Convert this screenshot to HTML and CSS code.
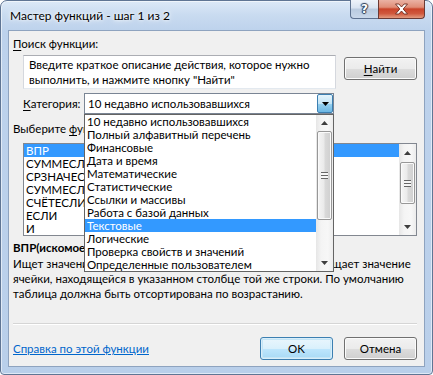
FILE: index.html
```html
<!DOCTYPE html>
<html lang="ru">
<head>
<meta charset="utf-8">
<title>Мастер функций - шаг 1 из 2</title>
<link rel="stylesheet" href="styles.css">
</head>
<body>
<div class="window">
  <div class="titlebar">
    <div class="title">Мастер функций - шаг 1 из 2</div>
    <div class="caption-btns">
      <div class="cbtn help">?</div>
      <div class="cbtn close">
        <svg width="15" height="12" viewBox="0 0 15 12"><path d="M1.5 1h3.4l2.6 3 2.6-3h3.4l-4.3 5 4.3 5h-3.4l-2.6-3-2.6 3h-3.4l4.3-5z" fill="#ffffff" stroke="#6b2a1e" stroke-width="0.9" stroke-linejoin="round"/></svg>
      </div>
    </div>
  </div>
  <div class="client">
    <div class="label"><u>П</u>оиск функции:</div>
    <div class="search-row">
      <div class="search-box">Введите краткое описание действия, которое нужно<br>выполнить, и нажмите кнопку "Найти"</div>
      <div class="btn find"><u>Н</u>айти</div>
    </div>
    <div class="cat-row">
      <div class="cat-label"><u>К</u>атегория:</div>
      <div class="combo">
        <div class="combo-text">10 недавно использовавшихся</div>
        <div class="combo-arrow">
          <svg width="7" height="4" viewBox="0 0 7 4"><path d="M0 0h7L3.5 4z" fill="#000"/></svg>
        </div>
        <div class="dropdown">
          <ul class="items">
            <li>10 недавно использовавшихся</li>
            <li>Полный алфавитный перечень</li>
            <li>Финансовые</li>
            <li>Дата и время</li>
            <li>Математические</li>
            <li>Статистические</li>
            <li>Ссылки и массивы</li>
            <li>Работа с базой данных</li>
            <li class="sel">Текстовые</li>
            <li>Логические</li>
            <li>Проверка свойств и значений</li>
            <li>Определенные пользователем</li>
          </ul>
          <div class="scrollbar dd-scroll">
            <div class="sb-btn"><svg width="7" height="4" viewBox="0 0 7 4"><path d="M0 4h7L3.5 0z" fill="#3e3e3e"/></svg></div>
            <div class="sb-track">
              <div class="thumb"><span class="grip"></span></div>
            </div>
            <div class="sb-btn"><svg width="7" height="4" viewBox="0 0 7 4"><path d="M0 0h7L3.5 4z" fill="#3e3e3e"/></svg></div>
          </div>
        </div>
      </div>
    </div>
    <div class="label choose">Выберите <u>ф</u>ункцию:</div>
    <div class="func-list">
      <ul class="items">
        <li class="sel">ВПР</li>
        <li>СУММЕСЛИМН</li>
        <li>СРЗНАЧЕСЛИ</li>
        <li>СУММЕСЛИ</li>
        <li>СЧЁТЕСЛИ</li>
        <li>ЕСЛИ</li>
        <li>И</li>
      </ul>
      <div class="scrollbar fl-scroll">
        <div class="sb-btn"><svg width="7" height="4" viewBox="0 0 7 4"><path d="M0 4h7L3.5 0z" fill="#3e3e3e"/></svg></div>
        <div class="sb-track">
          <div class="thumb"><span class="grip"></span></div>
        </div>
        <div class="sb-btn"><svg width="7" height="4" viewBox="0 0 7 4"><path d="M0 0h7L3.5 4z" fill="#3e3e3e"/></svg></div>
      </div>
    </div>
    <div class="func-sig">ВПР(искомое_значение;таблица;номер_столбца;интервальный_просмотр)</div>
    <div class="func-desc">Ищет значение в крайнем левом столбце таблицы и возвращает значение<br>ячейки, находящейся в указанном столбце той же строки. По умолчанию<br>таблица должна быть отсортирована по возрастанию.</div>
    <div class="separator"></div>
    <div class="footer">
      <a class="help-link" href="#">Справка по этой функции</a>
      <div class="btn ok">OK</div>
      <div class="btn cancel">Отмена</div>
    </div>
  </div>
</div>
</body>
</html>
```

FILE: styles.css
```css
html, body {
  margin: 0;
  padding: 0;
  background: #ffffff;
}

body {
  width: 433px;
  height: 375px;
  overflow: hidden;
  font-family: "Lato", "Liberation Sans", sans-serif;
  font-size: 12px;
  color: #000;
}

u {
  text-decoration: underline;
  text-underline-offset: 2px;
}

.window {
  box-sizing: border-box;
  width: 433px;
  height: 375px;
  border: 1px solid #5f7594;
  border-radius: 7px 7px 4px 4px;
  background: linear-gradient(180deg, #dce9f7 0px, #c9dbf0 14px, #bdd2ec 30px, #b9cfea 100%);
  padding: 0 7px 7px 7px;
  display: flex;
  flex-direction: column;
  box-shadow: inset 0 0 0 1px rgba(255, 255, 255, 0.55);
}

.titlebar {
  height: 29px;
  display: flex;
  align-items: flex-start;
}

.title {
  flex: 1;
  padding-left: 2px;
  padding-top: 6px;
  line-height: 17px;
  color: #000;
  text-shadow: 0 0 6px #ffffff, 0 0 3px #ffffff;
}

.caption-btns {
  display: flex;
  margin-top: -1px;
}

.cbtn {
  height: 19px;
  box-sizing: border-box;
  display: flex;
  align-items: center;
  justify-content: center;
}

.help {
  width: 28px;
  border: 1px solid #5d718f;
  border-top: none;
  border-right: none;
  border-radius: 0 0 0 4px;
  background: linear-gradient(180deg, #eef3fa 0%, #d8e3f1 45%, #b9cadf 50%, #c9d8ea 100%);
  color: #ffffff;
  font-family: "DejaVu Sans", sans-serif;
  font-weight: bold;
  font-size: 12px;
  text-shadow: 0 0 1px #2b3c55, 1px 0 1px #2b3c55, -1px 0 1px #2b3c55, 0 1px 1px #2b3c55, 0 -1px 1px #2b3c55;
}

.close {
  width: 47px;
  border: 1px solid #6b3a34;
  border-top: none;
  border-radius: 0 0 4px 0;
  background: linear-gradient(180deg, #eab2a4 0%, #e08d77 40%, #c9442a 50%, #d0583d 75%, #e39b7f 100%);
}

.client {
  flex: 1;
  background: #f0f0f0;
  border: 1px solid #8ea3bf;
  padding: 5px 7px 0 4px;
  display: flex;
  flex-direction: column;
  font-size: 11.5px;
}

.label {
  height: 15px;
  line-height: 15px;
}

.search-row {
  margin-top: 4px;
  display: flex;
  align-items: flex-start;
  padding-left: 10px;
}

.search-box {
  box-sizing: border-box;
  width: 313px;
  height: 34px;
  background: #ffffff;
  border: 1px solid #abadb3;
  border-color: #abadb3 #d5d8de #e3e9ef #d5d8de;
  padding: 1px 0 0 5px;
  line-height: 15px;
  white-space: nowrap;
}

.btn {
  box-sizing: border-box;
  width: 73px;
  height: 23px;
  border: 1px solid #707070;
  border-radius: 3px;
  background: linear-gradient(180deg, #f2f2f2 0%, #ebebeb 50%, #dddddd 51%, #cfcfcf 100%);
  box-shadow: inset 0 0 0 1px #fbfbfb;
  display: flex;
  align-items: center;
  justify-content: center;
  line-height: 15px;
}

.find {
  margin-left: auto;
  margin-top: 2px;
}

.cat-row {
  margin-top: 4px;
  display: flex;
  align-items: center;
  padding-left: 10px;
}

.cat-label {
  width: 61px;
  line-height: 15px;
}

.combo {
  position: relative;
  box-sizing: border-box;
  width: 250px;
  height: 21px;
  background: #ffffff;
  border: 1px solid #7a8594;
  display: flex;
  align-items: stretch;
}

.combo-text {
  flex: 1;
  padding-left: 3px;
  line-height: 19px;
}

.combo-arrow {
  box-sizing: border-box;
  width: 16px;
  border: 1px solid #3c7fb1;
  border-radius: 2px;
  background: linear-gradient(180deg, #e5f4fc 0%, #c4e5f6 50%, #98d1ef 51%, #6cb7e4 100%);
  display: flex;
  align-items: center;
  justify-content: center;
}

.dropdown {
  position: absolute;
  left: -1px;
  top: 20px;
  box-sizing: border-box;
  width: 250px;
  height: 158px;
  background: #ffffff;
  border: 1px solid #646464;
  display: flex;
  z-index: 5;
}

.items {
  list-style: none;
  margin: 0;
  padding: 0;
  flex: 1;
  overflow: hidden;
}

.items li {
  height: 13px;
  line-height: 13px;
  padding-left: 2px;
  white-space: nowrap;
  overflow: hidden;
}

.items li.sel {
  background: #3399ff;
  color: #ffffff;
}

.scrollbar {
  width: 17px;
  display: flex;
  flex-direction: column;
  background: linear-gradient(90deg, #e6e6e6 0%, #f4f4f4 30%, #f7f7f7 70%, #ececec 100%);
}

.sb-btn {
  display: flex;
  align-items: center;
  justify-content: center;
}

.sb-track {
  flex: 1;
  display: flex;
  flex-direction: column;
}

.thumb {
  box-sizing: border-box;
  margin: 0 1px;
  border: 1px solid #979797;
  border-radius: 2px;
  background: linear-gradient(90deg, #f5f5f5 0%, #eaeaea 45%, #d9d9d9 55%, #cfcfcf 100%);
  box-shadow: inset 0 0 0 1px #fafafa;
  display: flex;
  align-items: center;
  justify-content: center;
}

.grip {
  width: 7px;
  height: 7px;
  background: repeating-linear-gradient(180deg, #666666 0px, #666666 1px, #f6f6f6 1px, #f6f6f6 3px);
}

.dd-scroll .sb-btn {
  height: 16px;
}

.dd-scroll .thumb {
  height: 89px;
}

.fl-scroll .sb-btn {
  height: 17px;
}

.fl-scroll .thumb {
  height: 42px;
  margin-top: 1px;
}

.choose {
  margin-top: 7px;
}

.func-list {
  margin-top: 7px;
  margin-left: 10px;
  box-sizing: border-box;
  height: 93px;
  background: #ffffff;
  border: 1px solid #828790;
  display: flex;
}

.func-sig {
  margin-top: 4px;
  width: 300px;
  height: 15px;
  line-height: 15px;
  font-weight: bold;
  white-space: nowrap;
  overflow: hidden;
}

.func-desc {
  margin-top: 1px;
  line-height: 15px;
  white-space: nowrap;
}

.separator {
  margin-top: 22px;
  height: 0;
  border-top: 1px solid #d5d5d5;
  border-bottom: 1px solid #ffffff;
}

.footer {
  margin-top: 12px;
  display: flex;
  align-items: center;
  height: 23px;
}

.help-link {
  color: #0066cc;
  text-decoration: underline;
  line-height: 15px;
  margin-right: auto;
}

.ok {
  border-color: #3c7fb1;
  background: linear-gradient(180deg, #eaf6fd 0%, #d9f0fc 50%, #bee6fd 51%, #a7d9f5 100%);
  box-shadow: inset 0 0 0 1px #d8eefa, inset 0 0 0 2px #c4e5f6;
}

.cancel {
  margin-left: 11px;
}
```
